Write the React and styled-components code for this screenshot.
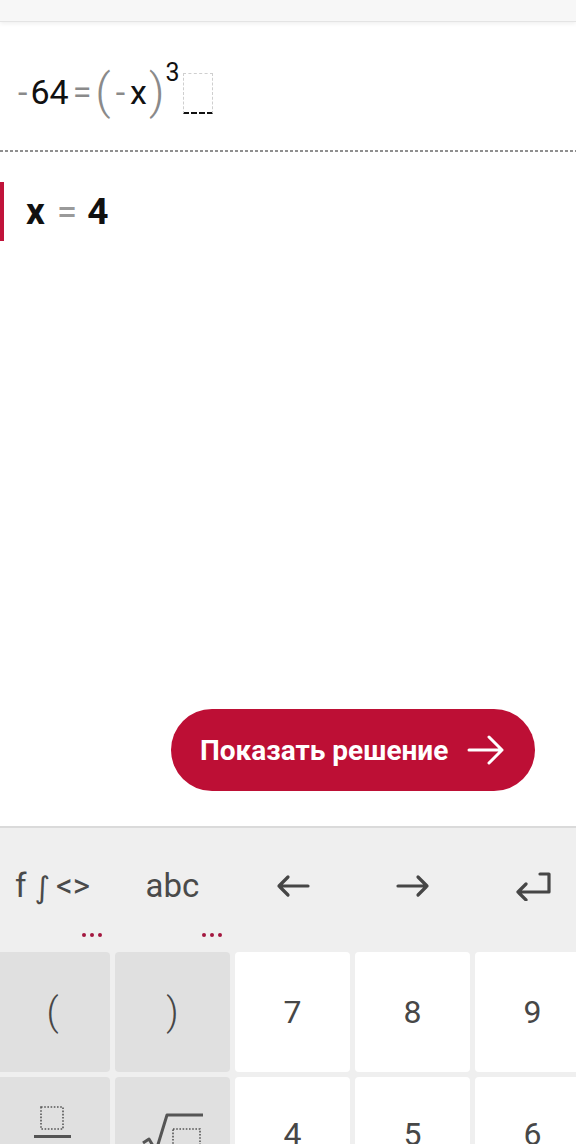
import React from "react";
import styled, { createGlobalStyle } from "styled-components";

const Global = createGlobalStyle`
  html, body { margin: 0; padding: 0; background: #fff; }
  body { font-family: Roboto, "Noto Sans", "Liberation Sans", sans-serif; }
  * { box-sizing: border-box; }
`;

const Screen = styled.div`
  width: 576px;
  height: 1144px;
  overflow: hidden;
  display: flex;
  flex-direction: column;
  background: #fff;
  & > * { flex-shrink: 0; }
`;

const TopStrip = styled.div`
  height: 22px;
  background: #f7f7f7;
  border-bottom: 1px solid #e4e4e4;
  box-shadow: 0 2px 4px rgba(0, 0, 0, 0.06);
`;

const EquationArea = styled.div`
  height: 128px;
  display: flex;
  align-items: center;
  padding-left: 17px;
  padding-top: 12px;
`;

const Expr = styled.div`
  display: flex;
  align-items: center;
  line-height: 1;
  color: #111;
`;

const Tok = styled.span`
  color: ${(p) => (p.$muted ? "#8a8a8a" : "#111")};
  font-size: ${(p) => p.$size || 34}px;
  font-weight: ${(p) => p.$weight || 400};
  margin: 0 ${(p) => p.$mx ?? 0}px;
  transform: ${(p) => (p.$up ? `translateY(-${p.$up}px)` : "none")};
`;

const Placeholder = styled.span`
  display: inline-block;
  width: 30px;
  height: 41px;
  margin-left: 2px;
  border: 1px dashed #cfcfcf;
  border-bottom: 2px dashed #111;
  transform: translateY(1px);
`;

const Divider = styled.div`
  height: 2px;
  background: repeating-linear-gradient(to right, #8f8f8f 0 3px, transparent 3px 5px);
`;

const AnswerRow = styled.div`
  margin-top: 30px;
  height: 59px;
  display: flex;
  align-items: center;
  border-left: 4px solid #c0133a;
  padding-left: 22px;
  font-size: 37px;
  font-weight: 700;
  color: #111;
`;

const Eq = styled.span`
  color: #9a9a9a;
  font-weight: 400;
  margin: 0 10px 0 12px;
`;

const Spacer = styled.div`
  height: 468px;
`;

const ButtonRow = styled.div`
  display: flex;
  justify-content: flex-end;
  padding-right: 41px;
  margin-bottom: 35px;
`;

const SolveButton = styled.button`
  width: 364px;
  height: 82px;
  border: none;
  border-radius: 41px;
  background: #bd0f35;
  color: #fff;
  display: flex;
  align-items: center;
  justify-content: space-between;
  padding: 0 30px 0 29px;
  font-family: Roboto, "Noto Sans", sans-serif;
  font-size: 28px;
  font-weight: 700;
  cursor: pointer;
`;

const Keyboard = styled.div`
  background: #efefef;
  border-top: 2px solid #dadada;
  display: flex;
  flex-direction: column;
`;

const Grid = styled.div`
  display: grid;
  grid-template-columns: repeat(5, 115px);
  column-gap: 5px;
  row-gap: 5px;
  margin-left: -5px;
  width: 595px;
`;

const ModeCell = styled.div`
  position: relative;
  height: 119px;
  display: flex;
  align-items: center;
  justify-content: center;
  padding-bottom: 4px;
  font-size: 33px;
  color: #4a4a4a;
`;

const Dots = styled.span`
  position: absolute;
  right: 8px;
  bottom: 10px;
  display: flex;
  gap: 4px;
  & > i {
    display: block;
    width: 4px;
    height: 4px;
    border-radius: 50%;
    background: #a3173f;
  }
`;

const Key = styled.div`
  height: 120px;
  border-radius: 4px;
  background: ${(p) => (p.$fn ? "#e0e0e0" : "#ffffff")};
  display: flex;
  align-items: center;
  justify-content: center;
  padding-bottom: ${(p) => p.$lift || 0}px;
  font-size: ${(p) => (p.$light ? 38 : 32)}px;
  font-weight: ${(p) => (p.$light ? 300 : 400)};
  color: #474747;
`;

const Integral = styled.span`
  font-family: "DejaVu Sans", sans-serif;
  font-size: 30px;
  margin: 0 6px 0 8px;
  transform: translateY(2px);
`;

const ArrowLeft = () => (
  <svg width="34" height="24" viewBox="0 0 34 24">
    <path d="M32 12H3M12 3L3 12l9 9" fill="none" stroke="#464646" strokeWidth="3.2" strokeLinecap="round" strokeLinejoin="round" />
  </svg>
);

const ArrowRight = () => (
  <svg width="34" height="24" viewBox="0 0 34 24">
    <path d="M2 12h29M22 3l9 9-9 9" fill="none" stroke="#464646" strokeWidth="3.2" strokeLinecap="round" strokeLinejoin="round" />
  </svg>
);

const EnterIcon = () => (
  <svg width="38" height="30" viewBox="0 0 38 30">
    <path d="M26 3h9v18H4M12 13l-8 8 8 8" fill="none" stroke="#464646" strokeWidth="3.2" strokeLinecap="round" strokeLinejoin="round" />
  </svg>
);

const FractionIcon = () => (
  <svg width="40" height="40" viewBox="0 0 40 40">
    <rect x="8" y="2" width="22" height="22" fill="none" stroke="#555" strokeWidth="1.6" strokeDasharray="1.6 1.6" />
    <rect x="1" y="30" width="37" height="3" fill="#555" />
  </svg>
);

const SqrtIcon = () => (
  <svg width="64" height="40" viewBox="0 0 64 40">
    <path d="M2 32l6-4 7 12L26 4h36" fill="none" stroke="#555" strokeWidth="3" strokeLinejoin="round" />
    <rect x="32" y="18" width="27" height="22" fill="none" stroke="#555" strokeWidth="1.6" strokeDasharray="1.6 1.6" />
  </svg>
);

const ButtonArrow = () => (
  <svg width="38" height="30" viewBox="0 0 38 30">
    <path d="M2 15h33M22 2l13 13-13 13" fill="none" stroke="#fff" strokeWidth="3" strokeLinecap="round" strokeLinejoin="round" />
  </svg>
);

export default function App() {
  return (
    <Screen>
      <Global />
      <TopStrip />
      <EquationArea>
        <Expr>
          <Tok $muted $mx={1}>-</Tok>
          <Tok $mx={2}>64</Tok>
          <Tok $muted $mx={2}>=</Tok>
          <Tok $muted $size={48} $weight={300} $mx={2}>(</Tok>
          <Tok $muted $mx={3}>-</Tok>
          <Tok $mx={2}>x</Tok>
          <Tok $muted $size={48} $weight={300} $mx={0}>)</Tok>
          <Tok $size={25} $up={20} $mx={1}>3</Tok>
          <Placeholder />
        </Expr>
      </EquationArea>
      <Divider />
      <AnswerRow>
        <span>x</span>
        <Eq>=</Eq>
        <span>4</span>
      </AnswerRow>
      <Spacer />
      <ButtonRow>
        <SolveButton>
          <span>Показать решение</span>
          <ButtonArrow />
        </SolveButton>
      </ButtonRow>
      <Keyboard>
        <Grid>
          <ModeCell>
            <span>f</span>
            <Integral>∫</Integral>
            <span>&lt;&gt;</span>
            <Dots><i /><i /><i /></Dots>
          </ModeCell>
          <ModeCell>
            abc
            <Dots><i /><i /><i /></Dots>
          </ModeCell>
          <ModeCell><ArrowLeft /></ModeCell>
          <ModeCell><ArrowRight /></ModeCell>
          <ModeCell><EnterIcon /></ModeCell>

          <Key $fn $light>(</Key>
          <Key $fn $light>)</Key>
          <Key>7</Key>
          <Key>8</Key>
          <Key>9</Key>

          <Key $fn $lift={24}><FractionIcon /></Key>
          <Key $fn $lift={12}><SqrtIcon /></Key>
          <Key $lift={6}>4</Key>
          <Key $lift={6}>5</Key>
          <Key $lift={6}>6</Key>
        </Grid>
      </Keyboard>
    </Screen>
  );
}
